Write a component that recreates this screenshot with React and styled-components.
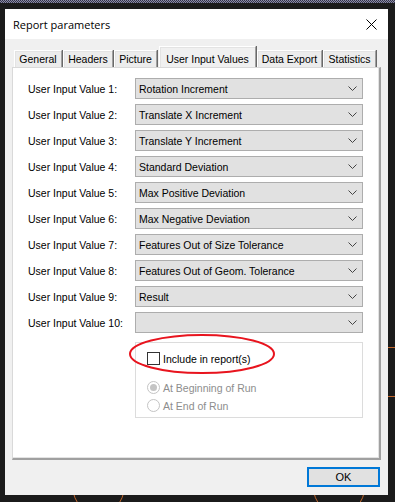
import React from "react";
import styled, { createGlobalStyle } from "styled-components";

const Global = createGlobalStyle`
  html, body { margin: 0; padding: 0; background: #1b1b1b; }
  body { width: 395px; height: 502px; overflow: hidden; }
  * { box-sizing: border-box; }
`;

const UI_FONT = `"Liberation Sans", Arial, sans-serif`;

const Screen = styled.div`
  position: relative;
  width: 395px;
  height: 502px;
  background: #1b1b1b;
  display: flex;
  flex-direction: column;
  overflow: hidden;
  font-family: ${UI_FONT};
  font-size: 10.5px;
  color: #000;
`;

const Hatch = styled.div`
  height: 3px;
  flex-shrink: 0;
  background: repeating-conic-gradient(#8c8ca6 0 25%, #34344a 0 50%) 0 0 / 2px 2px;
`;

const Backdrop = styled.svg`
  position: absolute;
  left: 0;
  top: 0;
  z-index: 0;
`;

const Window = styled.div`
  position: relative;
  z-index: 1;
  margin: 6px 0 0 5px;
  width: 383px;
  height: 486px;
  display: flex;
  flex-direction: column;
  background: #f0f0f0;
`;

const TitleBar = styled.div`
  height: 30px;
  flex-shrink: 0;
  background: #fff;
  display: flex;
  align-items: center;
  justify-content: space-between;
  padding: 0 11px 0 8px;
`;

const Title = styled.span`
  font-family: "Segoe UI", "Open Sans", "Liberation Sans", sans-serif;
  font-size: 11px;
  color: #000;
`;

const Body = styled.div`
  flex: 1;
  display: flex;
  flex-direction: column;
  padding: 7px 7px 0 7px;
`;

const TabStrip = styled.div`
  height: 21px;
  display: flex;
  align-items: flex-end;
  padding-left: 2px;
  flex-shrink: 0;
`;

const Tab = styled.div`
  width: ${(p) => p.$w}px;
  height: ${(p) => (p.$active ? 21 : 17)}px;
  margin-left: ${(p) => (p.$first ? 0 : p.$active ? 2 : 1)}px;
  background: ${(p) => (p.$active ? "#f0f0f0" : "#ececec")};
  border-top: 1px solid #fff;
  border-left: 1px solid #fff;
  border-right: 1px solid #a0a0a0;
  box-shadow: 1px 0 0 #696969, inset 1px 1px 0 #e3e3e3;
  display: flex;
  align-items: center;
  justify-content: center;
  padding-top: ${(p) => (p.$active ? 3 : 0)}px;
  white-space: nowrap;
  position: relative;
  z-index: ${(p) => (p.$active ? 2 : 1)};
`;

const Panel = styled.div`
  flex: 1;
  background: #fff;
  border-style: solid;
  border-width: 1px 2px 2px 1px;
  border-color: #d9d9d9 #a0a0a0 #a0a0a0 #d9d9d9;
  box-shadow: inset -1px -1px 0 #e3e3e3;
  padding: 10px 0 0 15px;
  display: flex;
  flex-direction: column;
`;

const FieldGrid = styled.div`
  display: grid;
  grid-template-columns: 107px 228px;
  grid-auto-rows: 21px;
  row-gap: 5px;
  align-items: center;
`;

const Label = styled.span`
  white-space: nowrap;
`;

const Select = styled.div`
  height: 21px;
  border: 1px solid #adadad;
  background: #e1e1e1;
  display: flex;
  align-items: center;
  justify-content: space-between;
  padding: 0 5px 0 3px;
  white-space: nowrap;
`;

const Group = styled.div`
  position: relative;
  margin: 9px 0 0 107px;
  width: 228px;
  height: 76px;
  border: 1px solid #dcdcdc;
  padding: 9px 0 0 11px;
  display: flex;
  flex-direction: column;
`;

const Choice = styled.div`
  display: flex;
  align-items: center;
  gap: 3px;
  height: 13px;
  margin-top: ${(p) => p.$mt || 0}px;
  color: ${(p) => (p.$disabled ? "#8d8d8d" : "#000")};
`;

const CheckBox = styled.span`
  width: 13px;
  height: 13px;
  border: 1px solid #333;
  background: #fff;
  flex-shrink: 0;
`;

const Radio = styled.span`
  width: 13px;
  height: 13px;
  border-radius: 50%;
  border: 1px solid #c4c4c4;
  background: #fff;
  flex-shrink: 0;
  display: flex;
  align-items: center;
  justify-content: center;
  &::after {
    content: "";
    width: 7px;
    height: 7px;
    border-radius: 50%;
    background: ${(p) => (p.$checked ? "#c4c4c4" : "transparent")};
  }
`;

const Annotation = styled.svg`
  position: absolute;
  left: -8px;
  top: -10px;
  pointer-events: none;
`;

const Footer = styled.div`
  height: 35px;
  flex-shrink: 0;
  display: flex;
  justify-content: flex-end;
  padding: 7px 1px 0 0;
`;

const Button = styled.div`
  width: 73px;
  height: 20px;
  border: 2px solid #0078d7;
  background: #e1e1e1;
  display: flex;
  align-items: center;
  justify-content: center;
  font-size: 11px;
`;

const Chevron = () => (
  <svg width="9" height="5" viewBox="0 0 9 5">
    <path d="M0.5 0.5 L4.5 4.5 L8.5 0.5" fill="none" stroke="#444" strokeWidth="1" />
  </svg>
);

const CloseIcon = () => (
  <svg width="11" height="11" viewBox="0 0 11 11">
    <path d="M0.5 0.5 L10.5 10.5 M10.5 0.5 L0.5 10.5" stroke="#000" strokeWidth="1" />
  </svg>
);

const tabs = [
  { label: "General", w: 48 },
  { label: "Headers", w: 50 },
  { label: "Picture", w: 43 },
  { label: "User Input Values", w: 97, active: true },
  { label: "Data Export", w: 65 },
  { label: "Statistics", w: 53 },
];

const values = [
  "Rotation Increment",
  "Translate X Increment",
  "Translate Y Increment",
  "Standard Deviation",
  "Max Positive Deviation",
  "Max Negative Deviation",
  "Features Out of Size Tolerance",
  "Features Out of Geom. Tolerance",
  "Result",
  "",
];

export default function App() {
  return (
    <Screen>
      <Global />
      <Backdrop width="395" height="502" viewBox="0 0 395 502">
        <circle cx="98.5" cy="488" r="25.5" fill="none" stroke="#c0652a" strokeWidth="1" />
        <circle cx="339" cy="488" r="25.5" fill="none" stroke="#c0652a" strokeWidth="1" />
        <path d="M388 347.5 H395 M388 396.5 H395" stroke="#c0652a" strokeWidth="1" />
      </Backdrop>
      <Hatch />
      <Window>
        <TitleBar>
          <Title>Report parameters</Title>
          <CloseIcon />
        </TitleBar>
        <Body>
          <TabStrip>
            {tabs.map((t, i) => (
              <Tab key={t.label} $w={t.w} $active={t.active} $first={i === 0}>
                {t.label}
              </Tab>
            ))}
          </TabStrip>
          <Panel>
            <FieldGrid>
              {values.map((v, i) => (
                <React.Fragment key={i}>
                  <Label>User Input Value {i + 1}:</Label>
                  <Select>
                    <span>{v}</span>
                    <Chevron />
                  </Select>
                </React.Fragment>
              ))}
            </FieldGrid>
            <Group>
              <Annotation width="150" height="44" viewBox="0 0 150 44">
                <ellipse cx="74" cy="21" rx="72" ry="19" fill="none" stroke="#e8141e" strokeWidth="2" />
              </Annotation>
              <Choice>
                <CheckBox />
                <span>Include in report(s)</span>
              </Choice>
              <Choice $disabled $mt={16}>
                <Radio $checked />
                <span>At Beginning of Run</span>
              </Choice>
              <Choice $disabled $mt={5}>
                <Radio />
                <span>At End of Run</span>
              </Choice>
            </Group>
          </Panel>
          <Footer>
            <Button>OK</Button>
          </Footer>
        </Body>
      </Window>
    </Screen>
  );
}
